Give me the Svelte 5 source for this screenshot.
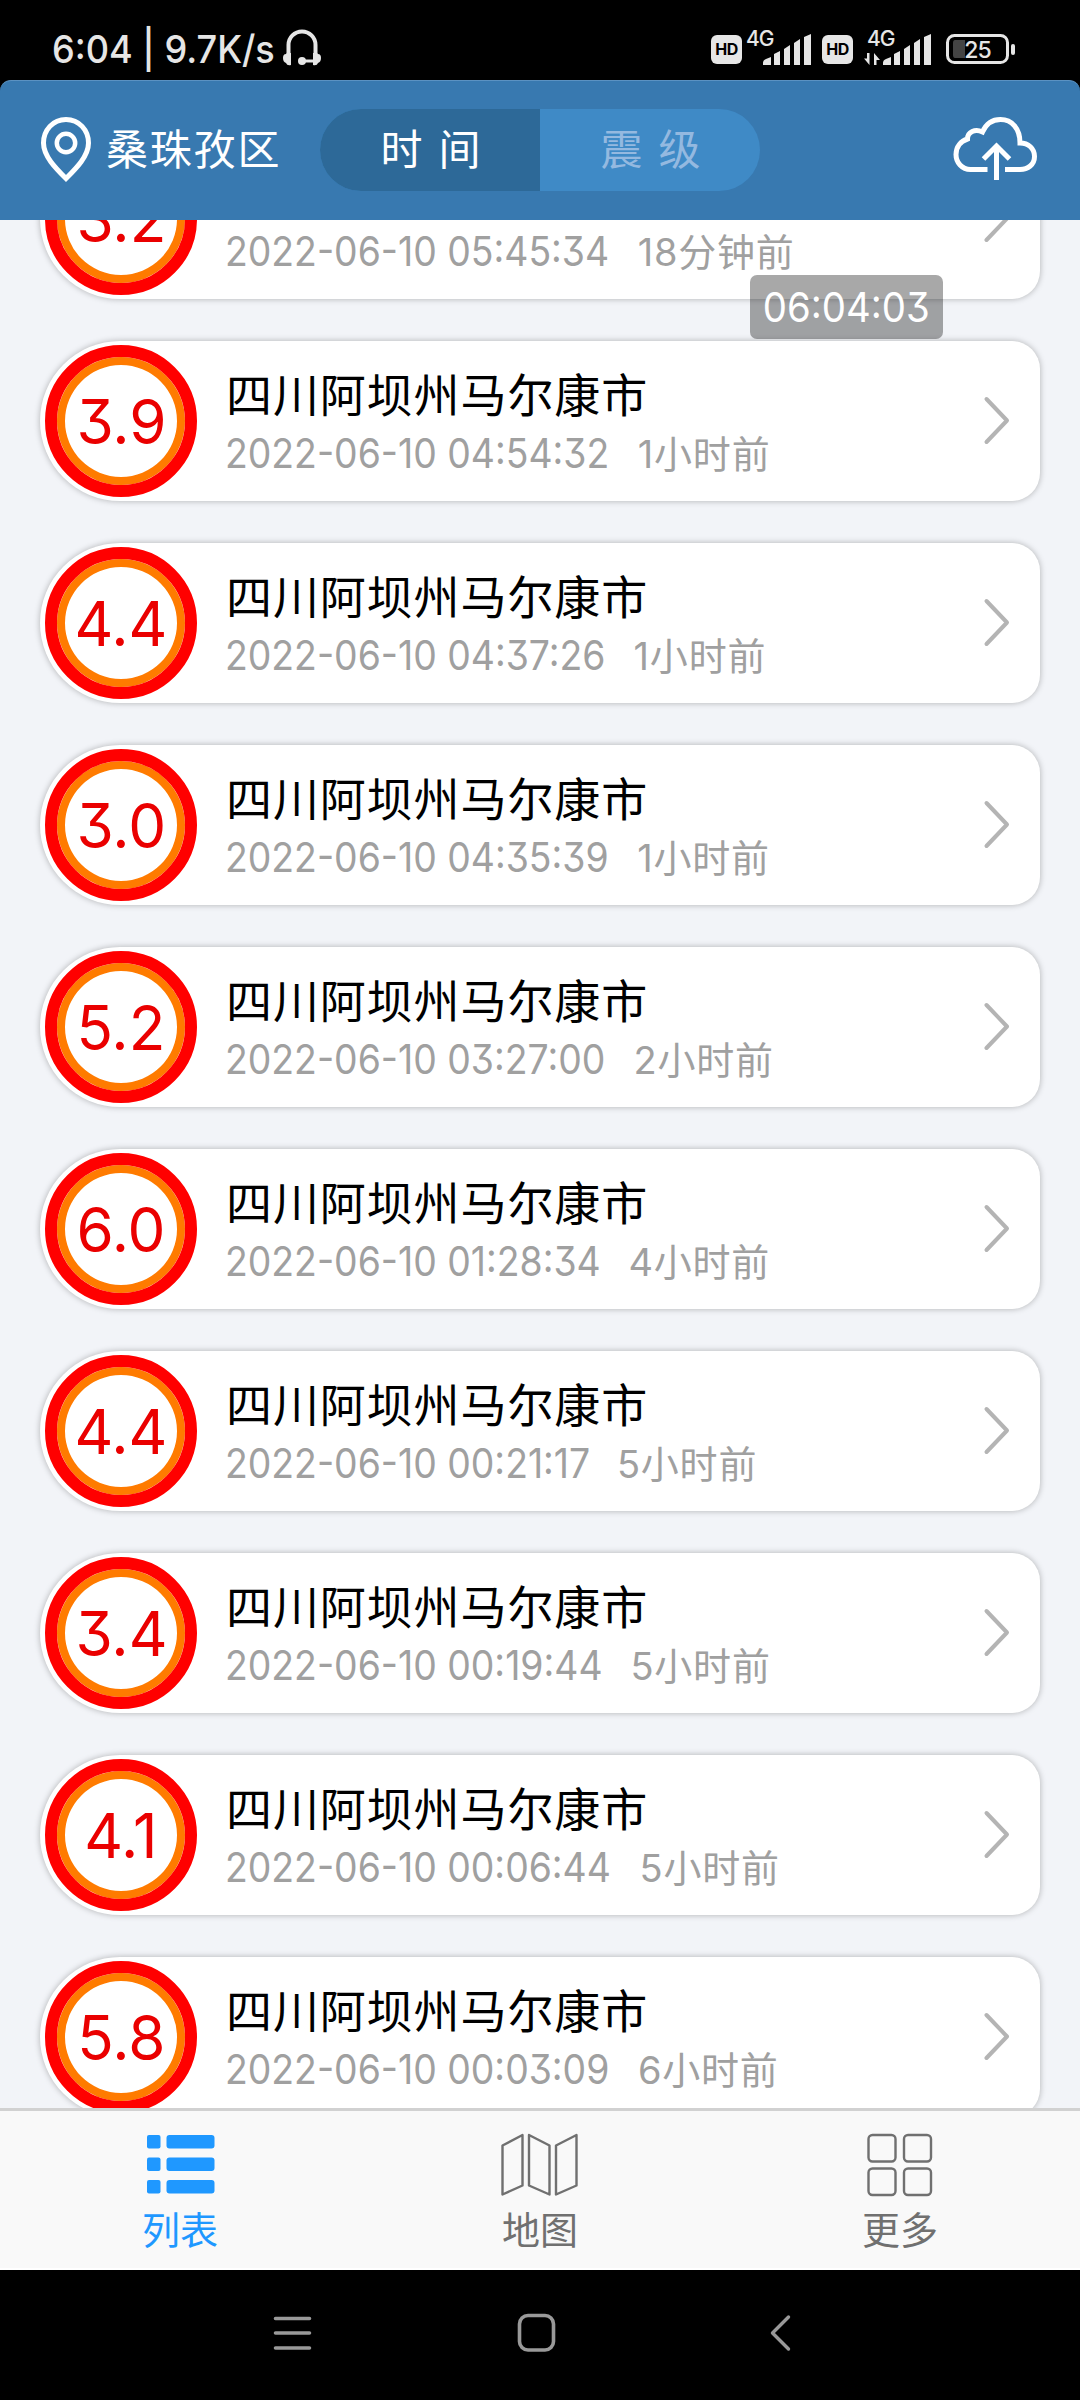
<script>
    const quakes = [
        { mag: '3.2', time: '2022-06-10 05:45:34', ago: '18分钟前' },
        { mag: '3.9', time: '2022-06-10 04:54:32', ago: '1小时前' },
        { mag: '4.4', time: '2022-06-10 04:37:26', ago: '1小时前' },
        { mag: '3.0', time: '2022-06-10 04:35:39', ago: '1小时前' },
        { mag: '5.2', time: '2022-06-10 03:27:00', ago: '2小时前' },
        { mag: '6.0', time: '2022-06-10 01:28:34', ago: '4小时前' },
        { mag: '4.4', time: '2022-06-10 00:21:17', ago: '5小时前' },
        { mag: '3.4', time: '2022-06-10 00:19:44', ago: '5小时前' },
        { mag: '4.1', time: '2022-06-10 00:06:44', ago: '5小时前' },
        { mag: '5.8', time: '2022-06-10 00:03:09', ago: '6小时前' }
    ];

    const place = '四川阿坝州马尔康市';

    let sortBy = $state('time');
    let tab = $state('list');
</script>

{#snippet bars()}
    <path d="M0 31v-2q0-3 3-4l5-2v8zM11 31V20l6-3v14zM21 31V15l6-4v20zM31 31V9l6-4v26zM41 31V3l7-3v31z" fill="#e6e6e6" />
{/snippet}

<div class="screen">
    <div class="status">
        <span class="clock">6:04 | 9.7K/s</span>
        <svg class="headset" width="38" height="38" viewBox="0 0 38 38">
            <path d="M5.500 28V16a13.500 13.500 0 0 1 27 0v12" fill="none" stroke="#e6e6e6" stroke-width="4" />
            <path d="M8 24v12q-4 1-5-2-3-1-3-5 0-4 3-4 1-2 5-1zM30 24v12q4 1 5-2 3-1 3-5 0-4-3-4-1-2-5-1z" fill="#e6e6e6" />
            <path d="M19 32h13" stroke="#e6e6e6" stroke-width="3" />
            <circle cx="19" cy="32" r="4" fill="#e6e6e6" />
        </svg>
        <div class="signals">
            <span class="hd">HD</span>
            <svg class="sim" width="66" height="36" viewBox="0 0 66 36">
                <text x="0" y="16.500" class="net">4G</text>
                <g transform="translate(17 5)">{@render bars()}</g>
            </svg>
            <span class="hd second">HD</span>
            <svg class="sim data" width="68" height="36" viewBox="0 0 68 36">
                <text x="3" y="16.500" class="net">4G</text>
                <path d="M5.500 24v12L0 29.500h3V24zM10 36V24l6 7h-3.500v5z" fill="#e6e6e6" />
                <g transform="translate(19 5)">{@render bars()}</g>
            </svg>
            <svg class="battery" width="70" height="30" viewBox="0 0 70 30">
                <rect x="1.500" y="1.500" width="60" height="27" rx="7" fill="none" stroke="#e6e6e6" stroke-width="3" />
                <path d="M9 6h10v18H9q-2 0-2-3V9q0-3 2-3z" fill="#444" />
                <rect x="65" y="10" width="4" height="11" rx="2" fill="#e6e6e6" />
                <text x="31.500" y="23.500" class="charge">25</text>
            </svg>
        </div>
    </div>

    <header>
        <svg class="pin" width="50" height="66" viewBox="0 0 50 66">
            <path d="M25 2.500C12 2.500 2.500 13 2.500 26c0 13 12 25 22.500 35.500C35.500 51 47.500 39 47.500 26 47.500 13 38 2.500 25 2.500z" fill="none" stroke="#fff" stroke-width="5" />
            <circle cx="25" cy="26" r="9.200" fill="none" stroke="#fff" stroke-width="4.500" />
        </svg>
        <span class="region">桑珠孜区</span>
        <div class="segment">
            <button class:active={sortBy === 'time'} onclick={() => (sortBy = 'time')}>时 间</button>
            <button class:active={sortBy === 'mag'} onclick={() => (sortBy = 'mag')}>震 级</button>
        </div>
        <svg class="cloud" width="84" height="68" viewBox="0 0 84 68">
            <g fill="none" stroke="#fff" stroke-width="5">
                <path d="M34.500 53.500H17.500C9 53.500 3 46.500 3 38.500c0-8 5-13.500 11.500-15.500C14.500 16 22 12.500 29.500 16 33 8 39.500 3.500 47.500 3.500c11.500 0 19.500 9 19.500 23.500 8.500 0 14.500 5.500 14.500 13.500s-6.500 13-14.500 13H52" />
                <path d="M43.500 64V31M30.500 43L43.500 30l13 13" />
            </g>
        </svg>
    </header>

    <main>
        <div class="list">
            {#each quakes as quake}
                <div class="card">
                    <div class="badge"><span>{quake.mag}</span></div>
                    <div class="info">
                        <div class="place">{place}</div>
                        <div class="when">
                            <span class="stamp">{quake.time}</span>
                            <span class="ago">{quake.ago}</span>
                        </div>
                    </div>
                    <svg class="arrow" width="28" height="50" viewBox="0 0 28 50">
                        <path d="M3.500 3l20.500 21.500L3.500 46" fill="none" stroke="#b4b4b4" stroke-width="4" stroke-linecap="round" stroke-linejoin="round" />
                    </svg>
                </div>
            {/each}
        </div>
        <div class="toast"><span>06:04:03</span></div>
    </main>

    <nav class="tabs">
        <button class:active={tab === 'list'} onclick={() => (tab = 'list')}>
            <svg width="80" height="64" viewBox="0 0 80 64" fill="currentColor">
                {#each [2, 24.500, 47] as y}
                    <rect x="7" {y} width="13.500" height="13.500" rx="2" />
                    <rect x="26.500" {y} width="48" height="13.500" rx="3" />
                {/each}
            </svg>
            <span>列表</span>
        </button>
        <button class:active={tab === 'map'} onclick={() => (tab = 'map')}>
            <svg width="80" height="64" viewBox="0 0 80 64" fill="none" stroke="currentColor" stroke-width="2.400" stroke-linejoin="round">
                <path d="M2.500 12.500L22.500 2v50.500L2.500 61.500zM29 2l20.500 10.500v49L29 52.500zM56 12.500L76.500 2v50.500L56 61.500z" />
            </svg>
            <span>地图</span>
        </button>
        <button class:active={tab === 'more'} onclick={() => (tab = 'more')}>
            <svg width="80" height="64" viewBox="0 0 80 64" fill="none" stroke="currentColor" stroke-width="2.400">
                <rect x="8.500" y="2" width="27" height="26.500" rx="4" />
                <rect x="44" y="2" width="27" height="26.500" rx="4" />
                <rect x="8.500" y="35.500" width="27" height="26.500" rx="4" />
                <rect x="44" y="35.500" width="27" height="26.500" rx="4" />
            </svg>
            <span>更多</span>
        </button>
    </nav>

    <div class="keys">
        <svg width="40" height="40" viewBox="0 0 40 40" fill="none" stroke="#999" stroke-width="3.600" stroke-linecap="round">
            <path d="M3.500 5.500h34M3.500 20h34M3.500 35h34" />
        </svg>
        <svg width="40" height="40" viewBox="0 0 40 40" fill="none" stroke="#999" stroke-width="3.600">
            <rect x="3.500" y="2.500" width="34" height="34.500" rx="8.500" />
        </svg>
        <svg width="40" height="40" viewBox="0 0 40 40" fill="none" stroke="#999" stroke-width="3.400" stroke-linecap="round" stroke-linejoin="round">
            <path d="M28.500 4l-16 16 16 16" />
        </svg>
    </div>
</div>

<style>
    :global(body) {
        margin: 0;
        background: #000;
    }

    .screen {
        width: 1080px;
        height: 2400px;
        display: flex;
        flex-direction: column;
        overflow: hidden;
        background: #000;
        font-family: Inter, "Noto Sans CJK SC", sans-serif;
        font-feature-settings: "cv09";
    }

    svg {
        display: block;
        flex: none;
        overflow: visible;
    }

    button {
        border: none;
        margin: 0;
        padding: 0;
        background: none;
        font: inherit;
        cursor: pointer;
    }

    .status {
        height: 80px;
        display: flex;
        align-items: flex-start;
        color: #e6e6e6;
    }

    .clock {
        width: 230px;
        margin-left: 52px;
        padding-top: 26px;
        font-size: 38.500px;
        line-height: 46px;
        font-weight: 500;
        white-space: nowrap;
        transform: scaleX(0.938);
        transform-origin: left;
    }

    .headset {
        margin: 29px 0 0 1px;
    }

    .signals {
        display: flex;
        margin-left: 390px;
    }

    .hd {
        width: 31px;
        height: 29px;
        margin-top: 34.500px;
        border-radius: 6px;
        background: #e6e6e6;
        color: #000;
        font-size: 16px;
        line-height: 29px;
        font-weight: 700;
        text-align: center;
        letter-spacing: -0.5px;
    }

    .hd.second {
        margin-left: 10px;
    }

    .sim {
        margin: 29px 0 0 4px;
    }

    .sim.data {
        margin-left: 11px;
    }

    .net {
        fill: #e6e6e6;
        font-size: 21px;
        letter-spacing: -1px;
        font-weight: 500;
    }

    .battery {
        margin: 34px 0 0 14px;
    }

    .charge {
        fill: #e6e6e6;
        font-size: 23px;
        font-weight: 500;
        text-anchor: middle;
        letter-spacing: -1px;
    }

    header {
        box-sizing: border-box;
        height: 140px;
        display: flex;
        align-items: flex-start;
        background: #3879b0;
        border-top: 1px solid #5b92c2;
        border-radius: 11px 11px 0 0;
        color: #fff;
    }

    .pin {
        margin: 36px 0 0 41px;
    }

    .region {
        width: 214px;
        margin: 38px 0 0 15px;
        font-size: 42px;
        line-height: 62px;
        letter-spacing: 1.8px;
        white-space: nowrap;
    }

    .segment {
        width: 440px;
        height: 82px;
        margin-top: 28px;
        display: flex;
        border-radius: 41px;
        overflow: hidden;
        background: #3f8ac6;
    }

    .segment button {
        flex: 1;
        padding-left: 1px;
        color: #94b9e0;
        font-size: 42px;
        line-height: 82px;
        word-spacing: 4px;
    }

    .segment .active {
        background: #2d6998;
        color: #fff;
    }

    .cloud {
        margin: 35px 0 0 193px;
    }

    main {
        position: relative;
        height: 1888px;
        overflow: hidden;
        background: #f2f4f8;
    }

    /* scrolled so that the first card is half under the header */
    .list {
        display: flex;
        flex-direction: column;
        gap: 42px;
        margin: -81px 40px 0;
    }

    .card {
        box-sizing: border-box;
        height: 160px;
        flex: none;
        display: flex;
        align-items: center;
        padding: 0 29px 0 5px;
        background: #fff;
        border-radius: 80px 28px 28px 80px;
        box-shadow: 0 0 6px rgba(0, 0, 0, 0.28);
    }

    .badge {
        box-sizing: border-box;
        width: 152px;
        height: 152px;
        display: flex;
        align-items: center;
        justify-content: center;
        border: 12px solid #f00;
        border-radius: 50%;
        box-shadow: inset 0 0 0 8px #ff7b00;
        color: #ea0000;
        font-size: 62px;
    }

    .badge span {
        transform: scaleX(0.97);
    }

    .info {
        flex: 1;
        padding: 8px 0 0 29px;
    }

    .place {
        font-size: 46px;
        line-height: 56px;
        letter-spacing: 0.9px;
        color: #000;
    }

    .when {
        display: flex;
        align-items: baseline;
        margin-left: -1px;
        font-size: 41px;
        line-height: 60px;
        color: #a0a0a0;
        white-space: nowrap;
    }

    .stamp {
        transform: scaleX(0.911);
        transform-origin: left;
        margin-right: -37px;
    }

    .ago {
        margin-left: 28px;
        font-size: 38px;
        letter-spacing: 0.8px;
    }

    .toast {
        position: absolute;
        left: 750px;
        top: 55px;
        width: 193px;
        height: 64px;
        display: flex;
        align-items: center;
        justify-content: center;
        border-radius: 7px;
        background: rgba(0, 0, 0, 0.34);
        color: #fff;
        font-size: 41px;
    }

    .toast span {
        transform: scaleX(0.935);
    }

    .tabs {
        box-sizing: border-box;
        height: 162px;
        display: flex;
        background: #f9f9f9;
        border-top: 3px solid #d1d1d1;
        border-bottom: 2px solid #fff;
    }

    .tabs button {
        flex: 1;
        display: flex;
        flex-direction: column;
        align-items: center;
        padding-top: 22px;
        color: #707070;
        font-size: 38px;
        line-height: 62px;
    }

    .tabs span {
        margin-top: 2px;
    }

    .tabs .active {
        color: #1f98ff;
    }

    .keys {
        flex: 1;
        display: flex;
        align-items: center;
        gap: 204px;
        padding: 0 0 5px 272px;
    }
</style>
